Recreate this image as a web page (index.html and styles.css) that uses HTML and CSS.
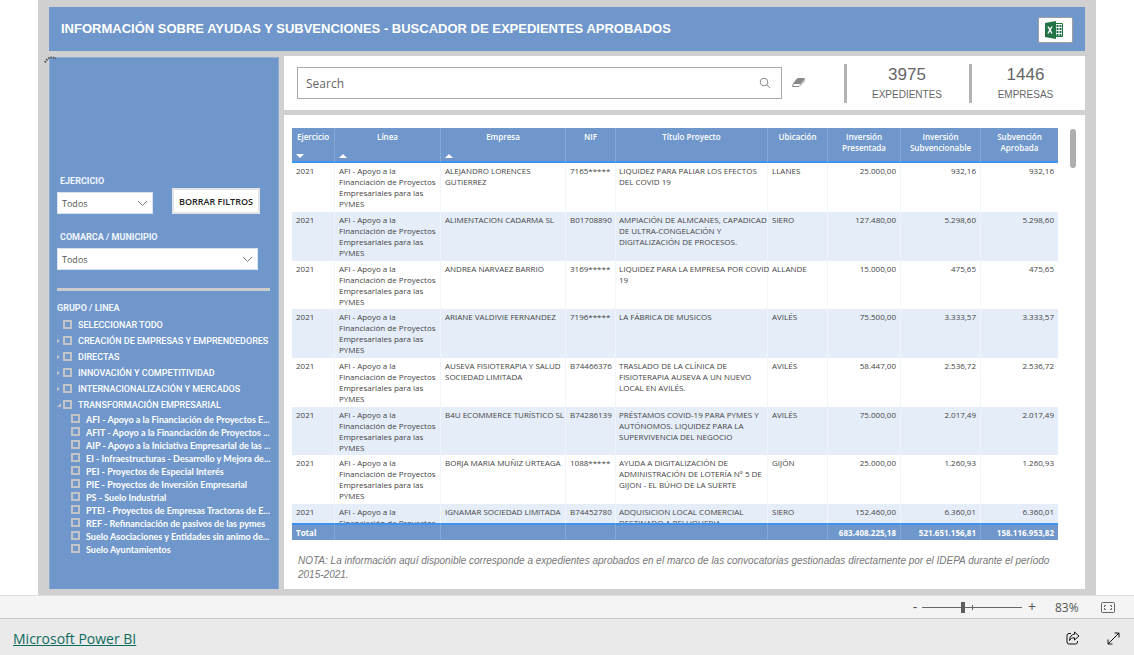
FILE: index.html
```html
<!DOCTYPE html>
<html lang="es">
<head>
<meta charset="utf-8">
<title>Buscador de expedientes aprobados</title>
<link rel="stylesheet" href="styles.css">
</head>
<body>
<main class="report">
  <header class="banner">
    <h1>INFORMACIÓN SOBRE AYUDAS Y SUBVENCIONES - BUSCADOR DE EXPEDIENTES APROBADOS</h1>
    <button class="excel" aria-label="Exportar a Excel">
      <svg width="20" height="20" viewBox="0 0 20 20"><path fill="#fff" stroke="#217346" d="M10 3.500h8.500v13H10z"/><path stroke="#217346" stroke-width="2" stroke-dasharray="2 1" d="M13.500 5v11M16.500 5v11" fill="none"/><path fill="#217346" d="M1 3l11-2v18L1 17z"/><path stroke="#fff" stroke-width="1.500" d="M4 6.500l4 7M8 6.500l-4 7"/></svg>
    </button>
  </header>
  <aside class="sidebar">
    <div class="filters">
      <div class="field year">
        <label for="year">EJERCICIO</label>
        <div class="drop"><select id="year"><option>Todos</option></select><svg width="11" height="7" viewBox="0 0 11 7"><path d="M1 1l4.500 4.500L10 1"/></svg></div>
      </div>
      <button class="clear">BORRAR FILTROS</button>
    </div>
    <div class="field town">
      <label for="town">COMARCA / MUNICIPIO</label>
      <div class="drop"><select id="town"><option>Todos</option></select><svg width="11" height="7" viewBox="0 0 11 7"><path d="M1 1l4.500 4.500L10 1"/></svg></div>
    </div>
    <hr class="rule">
    <h2>GRUPO / LINEA</h2>
    <ul class="tree">
      <li><i class="twig"></i><label><input type="checkbox"><span>SELECCIONAR TODO</span></label></li>
      <li><i class="twig closed"></i><label><input type="checkbox"><span>CREACIÓN DE EMPRESAS Y EMPRENDEDORES</span></label></li>
      <li><i class="twig closed"></i><label><input type="checkbox"><span>DIRECTAS</span></label></li>
      <li><i class="twig closed"></i><label><input type="checkbox"><span>INNOVACIÓN Y COMPETITIVIDAD</span></label></li>
      <li><i class="twig closed"></i><label><input type="checkbox"><span>INTERNACIONALIZACIÓN Y MERCADOS</span></label></li>
      <li><i class="twig open"></i><label><input type="checkbox"><span>TRANSFORMACIÓN EMPRESARIAL</span></label></li>
    </ul>
    <ul class="tree leaves">
      <li><label><input type="checkbox"><span>AFI - Apoyo a la Financiación de Proyectos E...</span></label></li>
      <li><label><input type="checkbox"><span>AFIT - Apoyo a la Financiación de Proyectos ...</span></label></li>
      <li><label><input type="checkbox"><span>AIP - Apoyo a la Iniciativa Empresarial de las ...</span></label></li>
      <li><label><input type="checkbox"><span>EI - Infraestructuras - Desarrollo y Mejora de...</span></label></li>
      <li><label><input type="checkbox"><span>PEI - Proyectos de Especial Interés</span></label></li>
      <li><label><input type="checkbox"><span>PIE - Proyectos de Inversión Empresarial</span></label></li>
      <li><label><input type="checkbox"><span>PS - Suelo Industrial</span></label></li>
      <li><label><input type="checkbox"><span>PTEI - Proyectos de Empresas Tractoras de E...</span></label></li>
      <li><label><input type="checkbox"><span>REF - Refinanciación de pasivos de las pymes</span></label></li>
      <li><label><input type="checkbox"><span>Suelo Asociaciones y Entidades sin animo de...</span></label></li>
      <li><label><input type="checkbox"><span>Suelo Ayuntamientos</span></label></li>
    </ul>
    <svg class="spinner" width="13" height="8" viewBox="0 0 13 8"><path d="M1 6.500Q5-1 12 2.500" fill="none" stroke="#555" stroke-width="2" stroke-dasharray="1.500 1"/></svg>
  </aside>
  <section class="panel summary">
    <div class="search">
      <input type="text" placeholder="Search" aria-label="Search">
      <button class="plain" aria-label="Buscar"><svg width="12" height="12" viewBox="0 0 12 12"><circle cx="5" cy="5" r="3.800"/><path d="M7.800 7.800L11 11"/></svg></button>
    </div>
    <button class="plain eraser" aria-label="Borrar"><svg width="13" height="10" viewBox="0 0 13 10"><path class="rubber" d="M5.500 .5h7L8.500 5.500h-7z"/><path d="M1.500 5.500L.5 8.500H7l5-5V1"/></svg></button>
    <div class="kpi"><strong>3975</strong><span>EXPEDIENTES</span></div>
    <div class="kpi last"><strong>1446</strong><span>EMPRESAS</span></div>
  </section>
  <section class="panel results">
    <div class="grid">
      <div class="scroller">
        <table>
          <colgroup><col class="c1"><col class="c2"><col class="c3"><col class="c4"><col class="c5"><col class="c6"><col class="c7"><col class="c8"><col class="c9"></colgroup>
          <thead><tr><th>Ejercicio<i class="sort down"></i></th><th>Línea<i class="sort up"></i></th><th>Empresa<i class="sort up"></i></th><th>NIF</th><th>Título Proyecto</th><th>Ubicación</th><th>Inversión Presentada</th><th>Inversión Subvencionable</th><th>Subvención Aprobada</th></tr></thead>
          <tbody>
            <tr><td>2021</td><td>AFI - Apoyo a la<br>Financiación de Proyectos<br>Empresariales para las<br>PYMES</td><td>ALEJANDRO LORENCES<br>GUTIERREZ</td><td>7165*****</td><td>LIQUIDEZ PARA PALIAR LOS EFECTOS<br>DEL COVID 19</td><td>LLANES</td><td>25.000,00</td><td>932,16</td><td>932,16</td></tr>
            <tr><td>2021</td><td>AFI - Apoyo a la<br>Financiación de Proyectos<br>Empresariales para las<br>PYMES</td><td>ALIMENTACION CADARMA SL</td><td>B01708890</td><td>AMPIACIÓN DE ALMCANES, CAPADICAD<br>DE ULTRA-CONGELACIÓN Y<br>DIGITALIZACIÓN DE PROCESOS.</td><td>SIERO</td><td>127.480,00</td><td>5.298,60</td><td>5.298,60</td></tr>
            <tr><td>2021</td><td>AFI - Apoyo a la<br>Financiación de Proyectos<br>Empresariales para las<br>PYMES</td><td>ANDREA NARVAEZ BARRIO</td><td>3169*****</td><td>LIQUIDEZ PARA LA EMPRESA POR COVID<br>19</td><td>ALLANDE</td><td>15.000,00</td><td>475,65</td><td>475,65</td></tr>
            <tr><td>2021</td><td>AFI - Apoyo a la<br>Financiación de Proyectos<br>Empresariales para las<br>PYMES</td><td>ARIANE VALDIVIE FERNANDEZ</td><td>7196*****</td><td>LA FÁBRICA DE MUSICOS</td><td>AVILÉS</td><td>75.500,00</td><td>3.333,57</td><td>3.333,57</td></tr>
            <tr><td>2021</td><td>AFI - Apoyo a la<br>Financiación de Proyectos<br>Empresariales para las<br>PYMES</td><td>AUSEVA FISIOTERAPIA Y SALUD<br>SOCIEDAD LIMITADA</td><td>B74466376</td><td>TRASLADO DE LA CLÍNICA DE<br>FISIOTERAPIA AUSEVA A UN NUEVO<br>LOCAL EN AVILÉS.</td><td>AVILÉS</td><td>58.447,00</td><td>2.536,72</td><td>2.536,72</td></tr>
            <tr><td>2021</td><td>AFI - Apoyo a la<br>Financiación de Proyectos<br>Empresariales para las<br>PYMES</td><td>B4U ECOMMERCE TURÍSTICO SL</td><td>B74286139</td><td>PRÉSTAMOS COVID-19 PARA PYMES Y<br>AUTÓNOMOS. LIQUIDEZ PARA LA<br>SUPERVIVENCIA DEL NEGOCIO</td><td>AVILÉS</td><td>75.000,00</td><td>2.017,49</td><td>2.017,49</td></tr>
            <tr><td>2021</td><td>AFI - Apoyo a la<br>Financiación de Proyectos<br>Empresariales para las<br>PYMES</td><td>BORJA MARIA MUÑIZ URTEAGA</td><td>1088*****</td><td>AYUDA A DIGITALIZACIÓN DE<br>ADMINISTRACIÓN DE LOTERÍA Nº 5 DE<br>GIJON - EL BÚHO DE LA SUERTE</td><td>GIJÓN</td><td>25.000,00</td><td>1.260,93</td><td>1.260,93</td></tr>
            <tr><td>2021</td><td>AFI - Apoyo a la<br>Financiación de Proyectos<br>Empresariales para las<br>PYMES</td><td>IGNAMAR SOCIEDAD LIMITADA</td><td>B74452780</td><td>ADQUISICION LOCAL COMERCIAL<br>DESTINADO A PELUQUERIA</td><td>SIERO</td><td>152.460,00</td><td>6.360,01</td><td>6.360,01</td></tr>
          </tbody>
          <tfoot><tr><td>Total</td><td></td><td></td><td></td><td></td><td></td><td>683.408.225,18</td><td>521.651.156,81</td><td>158.116.953,82</td></tr></tfoot>
        </table>
      </div>
      <div class="bar"></div>
    </div>
    <p class="note">NOTA: La información aquí disponible corresponde a expedientes aprobados en el marco de las convocatorias gestionadas directamente por el IDEPA durante el período 2015-2021.</p>
  </section>
</main>
<div class="zoombar">
  <button class="plain step">-</button>
  <div class="slide"><input type="range" min="0" max="100" value="41" aria-label="Zoom"></div>
  <button class="plain step">+</button>
  <span class="percent">83%</span>
  <button class="plain fit" aria-label="Ajustar a la página"><svg width="14" height="11" viewBox="0 0 14 11"><rect x=".5" y=".5" width="13" height="10" rx="1"/><path d="M5 3.500H3.500V5M9 3.500h1.500V5M5 7.500H3.500V6M9 7.500h1.500V6"/></svg></button>
</div>
<footer class="footer">
  <a href="#">Microsoft Power BI</a>
  <button class="plain" aria-label="Compartir"><svg width="14" height="14" viewBox="0 0 14 14"><path d="M5 2.500H3a2 2 0 0 0-2 2V11a2 2 0 0 0 2 2h6.500a2 2 0 0 0 2-2v-1M8.500 1l4.500 4-4.500 4V6.800C6 6.800 4.500 7.500 3.500 9.500 3.800 5.500 5.500 3.500 8.500 3.200z"/></svg></button>
  <button class="plain" aria-label="Pantalla completa"><svg width="13" height="13" viewBox="0 0 13 13"><path d="M7.500 1H12v4.500M12 1L1 12M1 7.500V12h4.500"/></svg></button>
</footer>
</body>
</html>
```
FILE: styles.css
```css
* { box-sizing: border-box; }
body {
  margin: 0;
  height: 100vh;
  display: flex;
  flex-direction: column;
  font-family: "Open Sans", sans-serif;
  background: #fff;
}
button, input, select { font: inherit; margin: 0; }
.plain { display: flex; padding: 0; border: 0; background: none; }
.plain svg { fill: none; stroke: #666; }

.report {
  flex: 1;
  min-height: 0;
  margin: 0 38px;
  padding: 7px 11px 6px;
  background: #d0d0d0;
  display: grid;
  grid-template-columns: 230px 1fr;
  grid-template-rows: 44px 54px 1fr;
  gap: 5px;
}
.banner {
  grid-column: 1 / -1;
  display: flex;
  align-items: center;
  justify-content: space-between;
  padding: 0 12px;
  background: #6f97cb;
}
.banner h1 {
  margin: 0 0 2px;
  font: bold 13px/15px "Liberation Sans", sans-serif;
  color: #fff;
}
.excel {
  width: 35px;
  height: 26px;
  margin-top: 2px;
  padding: 0 0 0 5px;
  display: flex;
  align-items: center;
  border: 1px solid #a0a0a0;
  border-radius: 2px;
  background: #fff;
}

.sidebar {
  position: relative;
  grid-row: 2 / 4;
  min-height: 0;
  margin-top: 1px;
  padding: 117px 8px 0 7px;
  background: #6f97cb;
  border: 1px solid #8fadd8;
  border-width: 1px 1px 0 1px;
  color: #fff;
}
.spinner { position: absolute; left: -6px; top: -2px; }
.filters { display: flex; align-items: flex-end; gap: 19px; }
.field { display: flex; flex-direction: column; gap: 5px; }
.field label, .sidebar h2 {
  margin: 0;
  font: 700 9px/12px Roboto, sans-serif;
  color: #f0f5fc;
}
.field label { padding-left: 3px; }
.year { width: 96px; }
.town { width: 201px; margin-top: 17px; }
.drop { display: grid; align-items: center; }
.drop select {
  grid-area: 1 / 1;
  width: 100%;
  height: 22px;
  padding: 0 4px;
  appearance: none;
  border: 1px solid #d8e2f0;
  border-radius: 0;
  background: #fff;
  color: #555;
  font-size: 9px;
}
.drop svg {
  grid-area: 1 / 1;
  justify-self: end;
  margin-right: 5px;
  fill: none;
  stroke: #777;
  pointer-events: none;
}
.clear {
  width: 88px;
  height: 26px;
  padding: 0;
  border: 2px solid #e4e4e4;
  background: #fff;
  color: #222;
  font-size: 9px;
  font-weight: 600;
  white-space: nowrap;
}
.rule { width: 213px; height: 3px; margin: 18px 0 11px; border: 0; background: #ccc; }
.tree {
  margin: 3px 0 0;
  padding: 0;
  list-style: none;
  font: 500 9px/16px Roboto, sans-serif;
  white-space: nowrap;
}
.tree li { display: flex; align-items: center; }
.tree label { display: flex; align-items: center; gap: 6px; }
.tree input {
  width: 9px;
  height: 9px;
  margin-bottom: 2px;
  appearance: none;
  border: 2px solid #c2c4c8;
  border-radius: 0;
}
.twig { flex: none; width: 6px; display: flex; }
.closed::before { content: ""; border: 2px solid transparent; border-left: 3px solid #c2c4c8; }
.open::before { content: ""; border: 2px solid transparent; border-right-color: #c2c4c8; border-bottom-color: #c2c4c8; }
.leaves { margin: 0; padding-left: 14px; font-family: Lato, sans-serif; font-weight: 700; line-height: 13px; }

.panel { background: #fff; min-width: 0; }
.summary {
  display: flex;
  align-items: center;
  padding: 0 12px 0 13px;
  font-family: "Liberation Sans", sans-serif;
  color: #666;
}
.search {
  flex: 1;
  height: 32px;
  display: flex;
  align-items: center;
  padding: 0 10px 0 8px;
  border: 1px solid #aaa;
}
.search input {
  flex: 1;
  padding: 0;
  border: 0;
  outline: 0;
  font: 12px "Open Sans", sans-serif;
}
.search input::placeholder { color: #666; }
.search svg { stroke: #888; }
.eraser { margin: 0 39px 0 10px; }
.eraser svg { stroke: #888; }
.rubber { fill: #888; }
.kpi {
  width: 125px;
  height: 39px;
  padding-right: 2px;
  border-left: 3px solid #b3b3b3;
  display: flex;
  flex-direction: column;
  align-items: center;
  gap: 4px;
}
.kpi strong { font-size: 17px; line-height: 21px; font-weight: 400; }
.kpi span { font-size: 10px; line-height: 12px; }
.kpi.last { width: 104px; padding: 0 0 0 6px; }

.results {
  min-height: 0;
  display: flex;
  flex-direction: column;
  padding: 13px 8px 8px;
}
.grid { flex: 1; min-height: 0; display: flex; gap: 12px; }
.scroller { flex: 1; overflow: hidden; }
.bar { width: 6px; height: 39px; margin: 1px 1px 0 0; border-radius: 3px; background: #b0aeac; }
table {
  width: 100%;
  table-layout: fixed;
  border-collapse: separate;
  border-spacing: 0;
  font: 8px/11px "Open Sans", sans-serif;
  color: #444;
}
.c1 { width: 43px; }
.c2 { width: 106px; }
.c3 { width: 125px; }
.c4 { width: 50px; }
.c6 { width: 60px; }
.c7 { width: 73px; }
.c8 { width: 80px; }
.c9 { width: 77px; }
th, td { padding: 0 4px; vertical-align: top; white-space: nowrap; }
td:nth-child(5) { padding-left: 3px; }
th {
  position: sticky;
  top: 0;
  height: 35px;
  padding-top: 3px;
  background: #6f97cb;
  border-bottom: 2px solid #3b93ef;
  border-right: 1px solid #86a8d6;
  color: #fff;
  font-weight: 600;
  white-space: normal;
}
.sort { display: block; width: 0; margin-top: 12px; border: 4px solid transparent; }
.up { border-bottom-color: #fff; border-top: 0; }
.down { border-top-color: #fff; border-bottom: 0; }
tbody td { height: 49px; padding-top: 2px; border-right: 1px solid #f0f4fb; }
tbody tr:nth-child(3n) td { height: 48px; }
tbody tr:nth-child(even) { background: #e5edf9; }
td:nth-child(n+7) { text-align: right; }
tfoot td {
  position: sticky;
  bottom: 0;
  height: 17px;
  padding-top: 2px;
  background: #6f97cb;
  border-top: 2px solid #3b93ef;
  border-right: 1px solid #86a8d6;
  color: #fff;
  font-weight: 700;
}
th:last-child, td:last-child { border-right: 0; }
.note {
  margin: 14px 20px 0 6px;
  font: italic 10px/14px "Liberation Sans", sans-serif;
  color: #777;
}
.results { padding-bottom: 7px; }

.zoombar {
  height: 23px;
  display: flex;
  align-items: center;
  justify-content: flex-end;
  padding-right: 19px;
  border-top: 1px solid #e0e0e0;
  background: #f4f4f4;
  color: #555;
}
.step { width: 14px; justify-content: center; font-size: 14px; line-height: 20px; color: #555; }
.slide { display: grid; width: 100px; margin: 0 3px 0 0; align-items: center; }
.slide::after { content: ""; grid-area: 1 / 1; width: 1px; height: 5px; margin-left: 50px; background: #666; }
.slide input { grid-area: 1 / 1; width: 100px; height: 12px; appearance: none; background: linear-gradient(#666, #666) center / 100% 1px no-repeat; }
.slide input::-webkit-slider-thumb { appearance: none; width: 4px; height: 11px; background: #605e5c; }
.percent { width: 24px; margin: 0 22px 0 16px; font-size: 12px; }
.footer {
  height: 37px;
  display: flex;
  align-items: center;
  gap: 27px;
  padding: 2px 14px 0 13px;
  border-top: 1px solid #c8c8c8;
  background: #eaeaea;
}
.footer a { margin-right: auto; font-size: 14px; color: #0e6a5e; }
.footer .plain svg { stroke: #111; }
```
